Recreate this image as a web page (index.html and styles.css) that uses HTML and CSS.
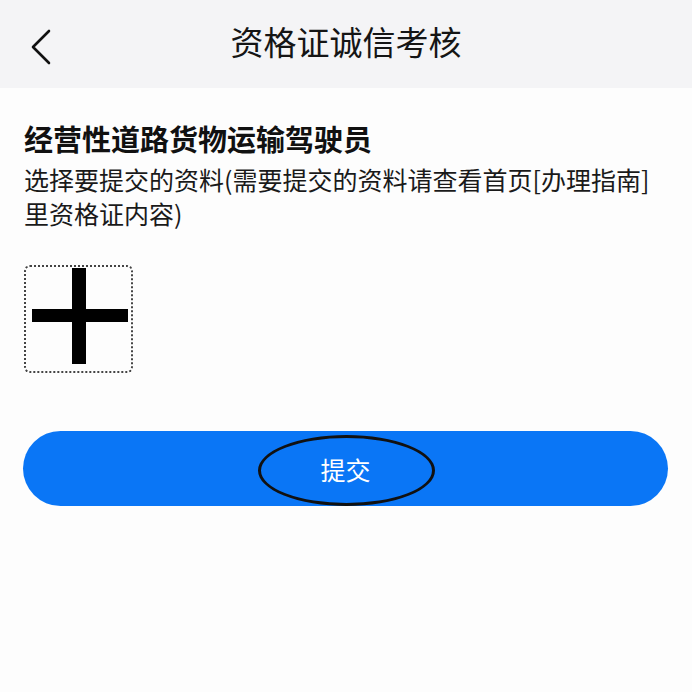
FILE: index.html
```html
<!DOCTYPE html>
<html lang="zh">
<head>
<meta charset="utf-8">
<link rel="stylesheet" href="styles.css">
</head>
<body>
<div class="page">
  <header class="nav">
    <span class="back">
      <svg width="22" height="36" viewBox="0 0 22 36"><path d="M19 2 L3 18 L19 34" fill="none" stroke="#111" stroke-width="2.6" stroke-linecap="round" stroke-linejoin="round"/></svg>
    </span>
    <h1 class="title">资格证诚信考核</h1>
  </header>
  <main class="content">
    <h2 class="heading">经营性道路货物运输驾驶员</h2>
    <p class="desc">选择要提交的资料(需要提交的资料请查看首页[办理指南]里资格证内容)</p>
    <div class="upload">
      <span class="plus-h"></span>
      <span class="plus-v"></span>
    </div>
    <div class="btn-wrap">
      <button class="submit">提交</button>
      <span class="circle"></span>
    </div>
  </main>
</div>
</body>
</html>
```
FILE: styles.css
```css
* { box-sizing: border-box; }
html, body { margin: 0; padding: 0; }
body {
  background: #fdfdfd;
  font-family: "Noto Sans CJK SC", "Noto Sans", sans-serif;
  color: #111;
  width: 692px;
  height: 692px;
  overflow: hidden;
}
.nav {
  height: 88px;
  background: #f4f4f6;
  display: flex;
  align-items: center;
  justify-content: center;
  position: relative;
}
.back {
  position: absolute;
  left: 30px;
  top: 29px;
  display: flex;
}
.title {
  margin: 0;
  font-size: 33px;
  font-weight: 400;
  line-height: 40px;
  margin-top: -6px;
  color: #151515;
}
.content {
  padding: 32px 16px 0 24px;
  display: flex;
  flex-direction: column;
}
.heading {
  margin: 0;
  font-size: 29px;
  font-weight: 700;
  line-height: 36px;
}
.desc {
  margin: 6px 0 0 0;
  font-size: 25px;
  line-height: 34px;
  color: #1a1a1a;
  max-width: 636px;
}
.upload {
  margin-top: 35px;
  width: 109px;
  height: 108px;
  border: 2px dotted #444;
  border-radius: 6px;
  position: relative;
}
.plus-h {
  position: absolute;
  left: 6px;
  top: 42px;
  width: 96px;
  height: 13px;
  background: #000;
}
.plus-v {
  position: absolute;
  left: 46px;
  top: 1px;
  width: 14px;
  height: 96px;
  background: #000;
}
.btn-wrap {
  margin-top: 58px;
  margin-left: -1px;
  position: relative;
  width: 645px;
  height: 75px;
}
.submit {
  width: 100%;
  height: 100%;
  border: none;
  border-radius: 38px;
  background: #0a76f6;
  color: #fff;
  font-family: "Noto Sans CJK SC", sans-serif;
  font-size: 25px;
  padding: 0;
}
.circle {
  position: absolute;
  left: 235px;
  top: 4px;
  width: 177px;
  height: 71px;
  border: 3px solid #111;
  border-radius: 50%;
  pointer-events: none;
}
```
